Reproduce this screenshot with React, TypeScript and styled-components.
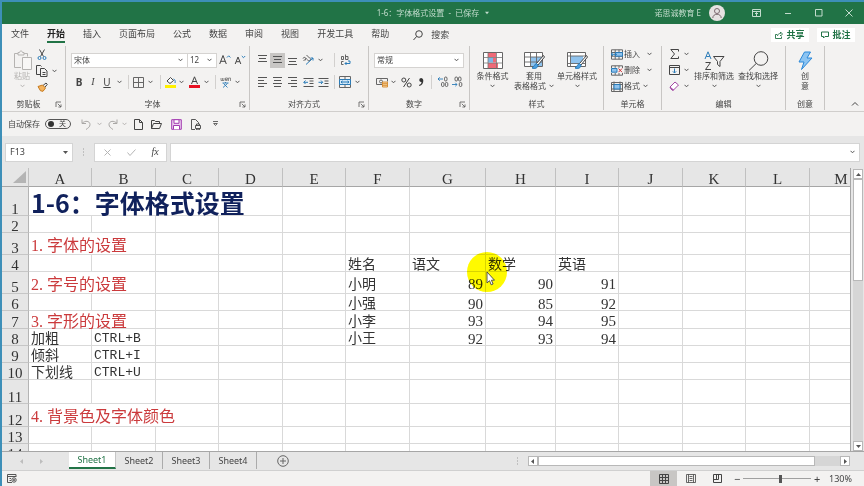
import React from "react";
import styled, { createGlobalStyle, css } from "styled-components";

const GREEN = "#217346";
const INK = "#444444";
const BLUE = "#2b7cb8";
const UI = `"Noto Sans", "Noto Sans CJK SC", sans-serif`;
const SONG = `"Liberation Serif", "Noto Sans CJK SC", serif`;

const GlobalStyle = createGlobalStyle`
  *, *::before, *::after { box-sizing: border-box; }
  body { margin: 0; font-family: ${UI}; font-size: 8px; line-height: 10px; color: ${INK}; }
  button, input, select { font: inherit; color: inherit; margin: 0; padding: 0; border: 0; background: none; border-radius: 0; }
`;

/* ---------- shell ---------- */

const Window = styled.div`
  display: flex;
  flex-direction: column;
  height: 100vh;
  overflow: hidden;
  background: #f3f2f1;
  border-top: 2px solid #3d8fb8;
  border-left: 2px solid #3d8fb8;
`;

const TitleBar = styled.header`
  display: grid;
  grid-template-columns: 1fr auto 1fr;
  align-items: center;
  height: 22px;
  flex: none;
  background: ${GREEN};
  color: #c3dccd;
`;

const DocTitle = styled.h1`
  grid-column: 2;
  margin: 0;
  font-size: 8px;
  font-weight: 400;
  line-height: 12px;
  display: flex;
  align-items: center;
  gap: 4px;
  white-space: pre;
`;

const WindowControls = styled.div`
  display: flex;
  align-items: center;
  justify-content: flex-end;
  padding-right: 8px;
`;

const Account = styled.button`
  display: flex;
  align-items: center;
  gap: 8px;
  white-space: nowrap;
  margin-right: 16px;
`;

const CaptionButton = styled.button`
  width: 31px;
  height: 16px;
  display: flex;
  align-items: center;
  justify-content: center;
  &:last-of-type { width: 14px; margin-left: 8px; }
`;

const TabStrip = styled.nav`
  display: flex;
  align-items: center;
  gap: 18px;
  height: 22px;
  flex: none;
  padding: 0 9px;
  font-size: 9px;
  line-height: 12px;
`;

const RibbonTab = styled.button<{ $active?: boolean }>`
  height: 22px;
  padding-bottom: 2px;
  white-space: nowrap;
  ${(p) =>
    p.$active &&
    css`
      font-weight: 700;
      color: #222;
      background: linear-gradient(${GREEN}, ${GREEN}) 0 17px / 100% 2px no-repeat;
    `}
`;

const SearchBox = styled.button`
  display: flex;
  align-items: center;
  gap: 8px;
  margin-left: 6px;
  white-space: nowrap;
`;

const TabActions = styled.div`
  display: flex;
  gap: 8px;
  margin-left: auto;
`;

const ActionButton = styled.button`
  display: flex;
  align-items: center;
  justify-content: center;
  gap: 3px;
  width: 38px;
  height: 14px;
  background: #fff;
  color: ${GREEN};
  font-weight: 700;
  white-space: nowrap;
`;

/* ---------- ribbon ---------- */

const Ribbon = styled.section`
  display: flex;
  height: 66px;
  flex: none;
  border-bottom: 1px solid #d0cecc;
`;

const GroupBox = styled.div<{ $w: number }>`
  display: flex;
  flex-direction: column;
  flex: none;
  width: ${(p) => p.$w}px;
  margin-bottom: 1px;
  border-right: 1px solid #c8c6c4;
`;

const GroupBody = styled.div<{ $pad?: number }>`
  display: flex;
  flex: 1;
  padding-left: ${(p) => p.$pad ?? 5}px;
`;

const GroupFooter = styled.div`
  display: flex;
  align-items: center;
  height: 12px;
  text-align: center;
`;

const GroupName = styled.span`
  flex: 1;
`;

const Launcher = styled.button`
  width: 10px;
  height: 10px;
  display: flex;
  align-items: center;
`;

const Stack = styled.div`
  display: flex;
  flex-direction: column;
`;

const ToolRow = styled.div<{ $h?: number }>`
  display: flex;
  align-items: center;
  height: ${(p) => p.$h ?? 22}px;
`;

const Tool = styled.button<{ $w: number; $on?: boolean }>`
  display: flex;
  align-items: center;
  justify-content: center;
  flex: none;
  width: ${(p) => p.$w}px;
  height: 15px;
  background: ${(p) => (p.$on ? "#c8c6c4" : "transparent")};
`;

const LetterTool = styled(Tool)<{ $kind?: "bold" | "italic" | "underline" }>`
  font-size: 10px;
  line-height: 12px;
  font-weight: ${(p) => (p.$kind === "bold" ? 700 : 400)};
  font-style: ${(p) => (p.$kind === "italic" ? "italic" : "normal")};
  font-family: ${(p) => (p.$kind === "italic" ? `"Liberation Serif", serif` : UI)};
  text-decoration: ${(p) => (p.$kind === "underline" ? "underline" : "none")};
`;

const Divider = styled.span<{ $w: number }>`
  flex: none;
  width: ${(p) => p.$w}px;
  height: 14px;
  background: linear-gradient(#d2d0ce, #d2d0ce) center / 1px 100% no-repeat;
`;

const Spacer = styled.span<{ $w: number }>`
  flex: none;
  width: ${(p) => p.$w}px;
`;

const BigTool = styled.button<{ $w: number; $dim?: boolean }>`
  display: flex;
  flex-direction: column;
  align-items: center;
  flex: none;
  width: ${(p) => p.$w}px;
  padding-top: 4px;
  color: ${(p) => (p.$dim ? "#b5b3b1" : INK)};
  white-space: nowrap;
`;

const BigIcon = styled.span`
  display: flex;
  align-items: center;
  height: 21px;
`;

const BigLine = styled.span`
  display: flex;
  align-items: center;
  gap: 3px;
  height: 10px;
`;

const RowTool = styled.button`
  display: flex;
  align-items: center;
  height: 16px;
  white-space: nowrap;
`;

const RowLabel = styled.span<{ $w: number }>`
  width: ${(p) => p.$w}px;
  padding-left: 1px;
  text-align: left;
`;

const Combo = styled.label<{ $w: number }>`
  display: flex;
  align-items: center;
  width: ${(p) => p.$w}px;
  height: 15px;
  flex: none;
  padding: 0 4px 0 2px;
  background: #fff;
  border: 1px solid #d5d3d1;
  & + & { border-left: 0; }
  select {
    appearance: none;
    flex: 1;
    min-width: 0;
    height: 12px;
    outline: none;
  }
`;

const RibbonTail = styled.div`
  flex: 1;
  display: flex;
  align-items: flex-end;
  justify-content: flex-end;
  padding: 0 5px 2px 0;
`;

/* ---------- quick access and formula bars ---------- */

const QuickBar = styled.div`
  display: flex;
  align-items: center;
  height: 24px;
  flex: none;
  padding-left: 6px;
`;

const AutoSave = styled.label`
  display: flex;
  align-items: center;
  gap: 5px;
  margin-right: 8px;
  white-space: nowrap;
`;

const Switch = styled.span`
  display: flex;
  align-items: center;
  justify-content: space-between;
  width: 26px;
  height: 10px;
  padding: 0 4px 0 2px;
  border: 1px solid #555;
  border-radius: 5px;
  font-size: 7px;
  line-height: 8px;
  input {
    appearance: none;
    width: 6px;
    height: 6px;
    border-radius: 3px;
    background: #333;
  }
`;

const FormulaBar = styled.div`
  display: flex;
  align-items: center;
  height: 32px;
  flex: none;
  padding: 0 4px 0 3px;
  background: #e6e6e6;
`;

const FieldBox = styled.div<{ $w?: number }>`
  display: flex;
  align-items: center;
  height: 19px;
  background: #fff;
  border: 1px solid #d4d4d4;
  ${(p) => (p.$w ? `width: ${p.$w}px; flex: none;` : "flex: 1;")}
  padding: 0 4px;
  input {
    flex: 1;
    min-width: 0;
    outline: none;
  }
`;

const NameBox = styled(FieldBox)`
  font-size: 9px;
`;

const CheckButtons = styled(FieldBox)`
  padding: 0;
  margin-right: 3px;
`;

const Dots = styled.span<{ $w: number }>`
  flex: none;
  width: ${(p) => p.$w}px;
  height: 10px;
  background: radial-gradient(circle, #999 0 1px, transparent 1px) center / 3px 3px repeat-y;
`;

/* ---------- sheet ---------- */

const SheetArea = styled.main`
  display: flex;
  flex: 1;
  min-height: 0;
  background: #e6e6e6;
`;

const GridPane = styled.div`
  position: relative;
  flex: 1;
  min-width: 0;
  overflow: hidden;
  background: #fff;
  border-right: 1px solid #a6a6a6;
`;

const Grid = styled.table`
  table-layout: fixed;
  width: 0;
  border-collapse: separate;
  border-spacing: 0;
  font-family: ${SONG};
  font-size: 15px;
  line-height: 12px;
  color: #333;
  white-space: nowrap;
`;

const ColHead = styled.th`
  height: 19px;
  padding: 4px 0 0;
  font-weight: 400;
  background: #e6e6e6;
  border-right: 1px solid #c0c0c0;
  border-bottom: 1px solid #a6a6a6;
`;

const CornerHead = styled(ColHead)`
  padding: 2px 2px 2px 0;
  svg { display: block; margin-left: auto; }
`;

const RowHead = styled.th`
  padding: 0;
  font-weight: 400;
  vertical-align: bottom;
  background: #e6e6e6;
  border-right: 1px solid #b4b4b4;
  border-bottom: 1px solid #c6c6c6;
`;

const Row = styled.tr<{ $h: number }>`
  height: ${(p) => p.$h}px;
`;

type Look = "text" | "number" | "title" | "topic" | "key";

const looks = {
  text: css`font-size: 14px;`,
  number: css`text-align: right; padding-top: 3px;`,
  title: css`
    padding-top: 2px;
    font-family: "Noto Sans CJK SC", sans-serif;
    font-size: 25px;
    font-weight: 700;
    line-height: 26px;
    color: #10215c;
  `,
  topic: css`font-size: 16px; color: #cb3a3c;`,
  key: css`font-family: "Liberation Mono", monospace; font-size: 13px;`,
};

const Cell = styled.td<{ $look?: Look }>`
  padding: 4px 2px 0;
  vertical-align: middle;
  border-right: 1px solid #d9d9d9;
  border-bottom: 1px solid #d9d9d9;
  ${(p) => p.$look && looks[p.$look]}
`;

const Spotlight = styled.span`
  position: absolute;
  left: 465px;
  top: 84px;
  width: 40px;
  height: 40px;
  border-radius: 20px;
  background: #fffa00;
  mix-blend-mode: multiply;
`;

const Pointer = styled.svg`
  position: absolute;
  left: 484px;
  top: 103px;
`;

const VScroll = styled.div`
  display: flex;
  flex-direction: column;
  width: 10px;
  flex: none;
  margin: 1px 1px 0 2px;
  background: #d6d6d6;
`;

const ScrollArrow = styled.button`
  display: flex;
  align-items: center;
  justify-content: center;
  flex: none;
  width: 10px;
  height: 10px;
  background: #fff;
  border: 1px solid #b8b8b8;
`;

const VThumb = styled.div`
  width: 10px;
  flex: 0 0 36%;
  margin-bottom: auto;
  background: #fff;
  border: 1px solid #b8b8b8;
`;

const SheetTabs = styled.div`
  display: flex;
  align-items: center;
  height: 20px;
  flex: none;
  background: #e6e6e6;
  border-top: 1px solid #a6a6a6;
  border-bottom: 1px solid #d0d0d0;
  padding-right: 14px;
`;

const SheetNav = styled.div`
  display: flex;
  justify-content: space-between;
  width: 67px;
  padding: 0 25px 0 17px;
`;

const SheetTab = styled.button<{ $active?: boolean }>`
  width: 47px;
  height: 17px;
  align-self: flex-start;
  font-size: 9px;
  line-height: 14px;
  border-right: 1px solid #ababab;
  ${(p) =>
    p.$active &&
    css`
      background: #fff;
      color: ${GREEN};
      border-right: 1px solid #c6c6c6;
      border-bottom: 2px solid ${GREEN};
    `}
`;

const AddSheet = styled.button`
  display: flex;
  margin-left: 20px;
  margin-right: auto;
`;

const HScroll = styled.div`
  display: flex;
  align-items: center;
  width: 38%;
  height: 10px;
  background: #d6d6d6;
`;

const HThumb = styled.div`
  flex: 0 0 86%;
  height: 10px;
  margin-right: auto;
  background: #fff;
  border: 1px solid #b8b8b8;
`;

const StatusBar = styled.footer`
  display: flex;
  align-items: center;
  height: 15px;
  flex: none;
  padding: 0 12px 0 5px;
`;

const ViewButton = styled.button<{ $on?: boolean }>`
  display: flex;
  align-items: center;
  justify-content: center;
  width: 27px;
  height: 15px;
  background: ${(p) => (p.$on ? "#c8c6c4" : "transparent")};
  &:first-of-type { margin-left: auto; }
`;

const ZoomStep = styled.button`
  width: 12px;
  font-size: 11px;
  line-height: 12px;
`;

const ZoomSlider = styled.input`
  appearance: none;
  width: 68px;
  height: 10px;
  background: linear-gradient(#a0a0a0, #a0a0a0) center / 100% 1px no-repeat;
  &::-webkit-slider-thumb {
    appearance: none;
    width: 3px;
    height: 8px;
    background: #555;
  }
`;

const ZoomValue = styled.span`
  margin-left: 6px;
  font-size: 9px;
`;

/* ---------- icons ---------- */

const Svg = ({ w, h, children, stroke = INK, sw = 1, vb }: {
  w: number; h: number; children: React.ReactNode; stroke?: string; sw?: number; vb?: string;
}) => (
  <svg width={w} height={h} viewBox={vb ?? `0 0 ${w} ${h}`} fill="none" stroke={stroke} strokeWidth={sw} aria-hidden="true">
    {children}
  </svg>
);

const Chevron = ({ color = "#555" }: { color?: string }) => (
  <Svg w={5} h={4} stroke={color}><path d="M.5.8 2.5 2.8 4.5.8" /></Svg>
);

const Triangle = ({ dir, color = "#555", size = 5 }: { dir: "up" | "down" | "left" | "right"; color?: string; size?: number }) => {
  const d = { up: "M0 4 2.5 1 5 4z", down: "M0 1h5L2.5 4z", left: "M4 0v5L1 2.5z", right: "M1 0v5l3-2.5z" }[dir];
  return <Svg w={size} h={size} vb="0 0 5 5" stroke="none"><path d={d} fill={color} /></Svg>;
};

const LauncherIcon = () => (
  <Svg w={7} h={7} stroke="#555" sw={0.8}><path d="M1 6V1h5M2.8 2.8 6 6M6 3.4V6H3.4" /></Svg>
);

const Lines = ({ rows, y = [1.5, 4.5, 7.5] }: { rows: [number, number][]; y?: number[] }) => (
  <Svg w={11} h={12} stroke="#555">
    {rows.map(([a, b], i) => <path key={i} d={`M${a} ${y[i]}H${b}`} />)}
  </Svg>
);

const PasteIcon = () => (
  <Svg w={19} h={21} stroke="#b5b3b1">
    <path d="M8 17.5H1.5V3.5H5M11 3.5h3.500v3M5 5V2.500h1.500c0-2 3-2 3 0H11V5z" />
    <path d="M9.500 7.500h9v12h-9z" fill="#f8f7f6" />
  </Svg>
);

const CutIcon = () => (
  <Svg w={10} h={11}><path d="M2.500.5 6.500 7.500M7.500.5 3.500 7.500" /><circle cx="2.500" cy="9" r="1.500" stroke={BLUE} /><circle cx="7.500" cy="9" r="1.500" stroke={BLUE} /></Svg>
);

const CopyIcon = () => (
  <Svg w={12} h={12}><path d="M4 9.500H.5v-9h4l1 1M4.500 3.500h4l2.500 2.500v5.500H4.500zM6.500 7.500h3M6.500 9.500h3" /></Svg>
);

const BrushIcon = () => (
  <Svg w={11} h={10}><path d="M6 3.500 9 1l1.300 1.300L8 5.200" /><path d="M1 4.500 5.500 3l3 3L6 9.300 3.500 8.800z" fill="#f4b45f" stroke="#c77a1c" /></Svg>
);

const GrowIcon = ({ up }: { up: boolean }) => (
  <Svg w={12} h={12}>
    <path d={up ? "M.7 10 4 1.500 7.300 10M1.900 7.300h4.200" : "M1.200 10 4 3l2.800 7M2.200 7.700h3.600"} />
    <path d={up ? "M8 3.500 9.700 1.800 11.400 3.500" : "M7.800 2 9.500 3.700 11.200 2"} stroke={BLUE} />
  </Svg>
);

const BordersIcon = () => (
  <Svg w={11} h={11} stroke="#666"><path d="M.5.5h10v10H.5zM5.500.5v10M.5 5.500h10" /></Svg>
);

const FillIcon = () => (
  <Svg w={11} h={12}><path d="M2 5 5.500 1.500 8.500 4.500 5 7.500z" fill="#fff" /><path d="M8.500 3c1.500.5 2 2 1.500 4" stroke={BLUE} /><path d="M0 10.500h11" stroke="#fff000" strokeWidth="3" /></Svg>
);

const FontColorIcon = () => (
  <Svg w={11} h={12}><path d="M2.500 8 5.500.8 8.500 8M3.500 5.500h4" /><path d="M0 10.500h11" stroke="#e81123" strokeWidth="3" /></Svg>
);

const PhoneticIcon = () => (
  <Svg w={12} h={11} stroke="#777"><path d="M1 1v2.500h3V1M2.500 1v2.500M5 2.500h2.500V1H5.500v2.500h2M8.500 4V1h2v3" strokeWidth=".8" /><path d="M2.500 6h6M5.500 5v1M3.500 6.500 7.500 10.500M7.500 6.500 3 10.500" stroke={BLUE} strokeWidth=".9" /></Svg>
);

const OrientIcon = () => (
  <Svg w={13} h={12} stroke="#555"><path d="M1 4.500a1.500 1.500 0 1 1 2 1.800M1.500 7 4.500 4M4.500 1l3 3a1.500 1.500 0 1 1-2 1.500" strokeWidth=".9" /><path d="M4 10.500 11 4M8.500 4H11v2.500" stroke={BLUE} /></Svg>
);

const WrapIcon = () => (
  <Svg w={11} h={12} stroke="#555"><path d="M1.500 2.500h2v3h-2zM5.500.5v5h2.500v-3H5.500M3.500 7.500H1.500v3h2" strokeWidth=".9" /><path d="M8 7h2v2.500H5M6.500 8 5 9.500 6.500 11" stroke={BLUE} /></Svg>
);

const IndentIcon = ({ out }: { out?: boolean }) => (
  <Svg w={11} h={11} stroke="#555"><path d="M.5 1.500h10M6.500 4h4M6.500 6.500h4M.5 9.500h10" /><path d={out ? "M5 5.300H.8M2.500 3.500.8 5.300 2.500 7" : "M.5 5.300h4.200M3 3.500l1.700 1.800L3 7"} stroke={BLUE} /></Svg>
);

const MergeIcon = () => (
  <Svg w={12} h={12}><path d="M.5.5h11v11H.5z" stroke="#666" /><path d="M.5 3.500h11v5H.5z" fill="#d3e8f7" stroke={BLUE} /><path d="M2 6h8M3.500 4.800 2 6l1.500 1.200M8.500 4.800 10 6 8.500 7.200" stroke={BLUE} /><path d="M6 .5v3M6 8.500v3" stroke="#666" /></Svg>
);

const CurrencyIcon = () => (
  <Svg w={12} h={11}><path d="M6 7.500H.5v-6h11v3" stroke="#666" /><circle cx="5" cy="4.500" r="1.500" stroke="#666" /><path d="M6.500 5h5v5h-5zM6.500 6.700h5M6.500 8.300h5" fill="#f9d8a8" stroke="#d58a2c" strokeWidth=".9" /></Svg>
);

const DecimalIcon = ({ more }: { more: boolean }) => (
  <Svg w={12} h={12} stroke="#555" sw={0.9}>
    <rect x="7.500" y="1" width="2.500" height="4" rx="1.200" />
    <rect x={more ? 4.5 : 4} y={more ? 6.5 : 1} width="2.500" height="4" rx="1.200" />
    <rect x="8.300" y="6.500" width="2.500" height="4" rx="1.200" />
    <path d={more ? "M6 3H1M2.700 1.300 1 3l1.700 1.700" : "M1 8.500h5M4.300 6.800 6 8.500 4.300 10.200"} stroke={BLUE} />
  </Svg>
);

const CondIcon = () => (
  <Svg w={20} h={17}>
    <path d="M.5.5h19v16H.5z" fill="#fff" stroke="#666" />
    <path d="M5 1h8v4H5zM5 11h10v5H5z" fill="#ef6a78" stroke="none" />
    <path d="M5 5.500h5v5H5z" fill="#7fb6e6" stroke="none" />
    <path d="M10 5.500h3v5h-3z" fill="#ef6a78" stroke="none" />
    <path d="M5 .5v16M13.500.5v16M.5 5.500h19M.5 11h19" stroke="#777" strokeWidth=".8" />
  </Svg>
);

const TableBrushIcon = ({ solid }: { solid?: boolean }) => (
  <Svg w={21} h={19}>
    <path d="M.5 1.500h18v14H.5z" fill="#fff" stroke="#666" />
    <path d={solid ? "M3.500 5h12.500v7.500H3.500z" : "M7 6h11v9H7z"} fill="#8fc3ee" stroke="none" />
    <path d={solid ? "M3.500 1.500v14M.5 5h18M.5 12.500h18" : "M6.500 1.500v14M12.500 1.500v14M.5 6h18M.5 11h18"} stroke="#666" strokeWidth=".9" />
    <path d="M19.500 4.500 12.500 12.500l1.500 1.500L20.500 6z" fill="#fff" />
    <path d="M12.500 12.500c-2 .5-2 3-4.500 4.500 3 1.300 6 0 6-3z" fill="#4a9ee0" stroke={BLUE} />
  </Svg>
);

const InsertCellsIcon = () => (
  <Svg w={12} h={11} stroke="#666"><path d="M.5.8h11v9.400H.5zM.5 3.500h11M.5 7.200h11M4.200.8v9.400M8 .8v9.400" /><path d="M4.500 3.500h7v3.700h-7z" fill="#8fc3ee" stroke={BLUE} /><path d="M6 5.300H0M2 3.500 0 5.300 2 7" stroke={BLUE} /></Svg>
);

const DeleteCellsIcon = () => (
  <Svg w={12} h={11} stroke="#666"><path d="M.5 3V.8h11V3M.5 8v2.200h11V8M4.200.8v2M8 .8v2M4.200 8v2M8 8v2" /><path d="M.5 3.500h5.500v3.700H.5z" fill="#8fc3ee" stroke={BLUE} /><path d="M7.500 3.500 11 7.200M11 3.500 7.500 7.200" stroke="#d13438" /></Svg>
);

const FormatCellsIcon = () => (
  <Svg w={12} h={11} stroke="#666"><path d="M.5 1.500h11v9H.5zM3 .5v10M9 .5v10M.5 3.500h11M.5 8h11" /><path d="M3 3.500h6V8H3z" fill="#8fc3ee" stroke={BLUE} /></Svg>
);

const SigmaIcon = () => <Svg w={9} h={10}><path d="M8.500 2.500v-2H.8L4.500 5 .8 9.500h7.700v-2" /></Svg>;
const FillDownIcon = () => <Svg w={11} h={10}><path d="M.5.5h10v9H.5zM.5 2.500h10" /><path d="M5.500 3.500v4.500M3.800 6.300 5.500 8l1.700-1.700" stroke={BLUE} /></Svg>;
const EraserIcon = () => <Svg w={11} h={10} stroke="#a349a4"><path d="M1 6 6 1l3.500 3L4.500 9H3z" fill="#fff" /><path d="M1 6l3.500 3H3z" fill="#c98bd0" /></Svg>;

const SortIcon = () => (
  <Svg w={21} h={20}><path d="M1 8 4 .8 7 8M2.200 5.500h3.600" stroke={BLUE} /><path d="M1.500 11.500h5l-5 7h5.500" /><path d="M9.500 5.500h10.500L16 10.500v5l-2.500-2v-3z" /></Svg>
);
const FindIcon = () => <Svg w={21} h={20}><circle cx="13" cy="7.500" r="6.800" /><path d="M8.200 12.500 1 19.500" /></Svg>;
const IdeasIcon = () => <Svg w={15} h={20}><path d="M6.500 1h6l-3.500 6h5L3.500 18.500 6 11H1z" fill="#8cc4f2" stroke="#2b88d8" /></Svg>;

const UndoIcon = ({ flip }: { flip?: boolean }) => (
  <Svg w={10} h={11} stroke="#a9a7a5"><path d={flip ? "M9 .5V4.500H5M9 4.500C6 1 1 2 1 5.500 1 8 3 9 5 10.500" : "M1 .5v4h4M1 4.500c3-3.500 8-2.500 8 1C9 8 7 9 5 10.500"} /></Svg>
);
const NewIcon = () => <Svg w={9} h={11}><path d="M.5.5h5l3 3v7h-8zM5.500.5v3h3" /></Svg>;
const OpenIcon = () => <Svg w={11} h={9}><path d="M.5 8.500v-8h3l1 1h4v2M.5 8.500l2-5h8l-2 5z" /></Svg>;
const SaveIcon = () => <Svg w={11} h={11} stroke="#a33bb0"><path d="M.7.7h9.600v9.600H.7z" fill="#ecd0f0" /><path d="M3 .7h5v3.600H3zM2.500 10.300V6.500h6v3.800" fill="#fff" /></Svg>;
const PrintIcon = () => <Svg w={11} h={11}><path d="M4 10.500H.5V.5h4l3 3V5M4.500 6.500h5v3h-5zM5.500 6.500V5h3v1.500M5.500 9.500v1.300h3V9.500" strokeWidth=".9" /></Svg>;

const Avatar = () => (
  <Svg w={16} h={16} stroke="#7c6a70"><circle cx="8" cy="8" r="8" fill="#e6e2e2" stroke="none" /><circle cx="8" cy="6" r="2.500" /><path d="M3.800 13c0-5 8.400-5 8.400 0" /></Svg>
);

const StatusIcon = () => (
  <Svg w={10} h={9} stroke="#555"><path d="M5 8.500H.5v-8h8.500V3M.5 2.500H9M2.500 4.500h1.500M2.500 6.500h1.500" /><circle cx="7" cy="6" r="2.200" /><circle cx="7" cy="6" r=".6" fill="#555" /></Svg>
);
const NormalViewIcon = () => <Svg w={10} h={10}><path d="M.5.5h9v9h-9zM3.500.5v9M6.500.5v9M.5 3.500h9M.5 6.500h9" /></Svg>;
const PageViewIcon = () => <Svg w={10} h={9}><path d="M.5.5h9v8h-9zM2.500.5v8M7.500.5v8M3.500 2.500h3M3.500 4.500h3M3.500 6.500h3" strokeWidth=".8" /></Svg>;
const BreakViewIcon = () => <Svg w={9} h={9}><path d="M.5.5h8v8h-8zM.5 5.500h5v-5M3.500.5v5" /></Svg>;

/* ---------- data ---------- */

const columns: [string, number][] = [
  ["A", 63], ["B", 64], ["C", 63], ["D", 64], ["E", 63], ["F", 64], ["G", 76],
  ["H", 70], ["I", 63], ["J", 64], ["K", 63], ["L", 64], ["M", 63],
];

type CellData = { text: string; look: Look; span?: number };
type RowData = { h: number; cells?: Record<string, CellData> };

const topic = (text: string, span = 2): CellData => ({ text, look: "topic", span });
const t = (text: string): CellData => ({ text, look: "text" });
const n = (text: string): CellData => ({ text, look: "number" });
const k = (text: string): CellData => ({ text, look: "key" });

const rows: RowData[] = [
  { h: 29, cells: { A: { text: "1-6：字体格式设置", look: "title", span: 4 } } },
  { h: 17 },
  { h: 22, cells: { A: topic("1. 字体的设置") } },
  { h: 17, cells: { F: t("姓名"), G: t("语文"), H: t("数学"), I: t("英语") } },
  { h: 22, cells: { A: topic("2. 字号的设置"), F: t("小明"), G: n("89"), H: n("90"), I: n("91") } },
  { h: 17, cells: { F: t("小强"), G: n("90"), H: n("85"), I: n("92") } },
  { h: 18, cells: { A: topic("3. 字形的设置"), F: t("小李"), G: n("93"), H: n("94"), I: n("95") } },
  { h: 17, cells: { A: t("加粗"), B: k("CTRL+B"), F: t("小王"), G: n("92"), H: n("93"), I: n("94") } },
  { h: 17, cells: { A: t("倾斜"), B: k("CTRL+I") } },
  { h: 17, cells: { A: t("下划线"), B: k("CTRL+U") } },
  { h: 24 },
  { h: 23, cells: { A: topic("4. 背景色及字体颜色", 3) } },
  { h: 17 },
  { h: 17 },
];

const SheetRow = ({ row, index }: { row: RowData; index: number }) => {
  const cells: React.ReactNode[] = [];
  for (let c = 0; c < columns.length; ) {
    const name = columns[c][0];
    const data = row.cells?.[name];
    cells.push(<Cell key={name} colSpan={data?.span} $look={data?.look}>{data?.text}</Cell>);
    c += data?.span ?? 1;
  }
  return <Row $h={row.h}><RowHead scope="row">{index + 1}</RowHead>{cells}</Row>;
};

const Group = ({ name, w, pad, launcher, children }: {
  name: string; w: number; pad?: number; launcher?: boolean; children: React.ReactNode;
}) => (
  <GroupBox $w={w} role="group" aria-label={name}>
    <GroupBody $pad={pad}>{children}</GroupBody>
    <GroupFooter>
      <GroupName>{name}</GroupName>
      {launcher && <Launcher aria-label={`${name}设置`}><LauncherIcon /></Launcher>}
    </GroupFooter>
  </GroupBox>
);

const Drop = ({ w, label, color }: { w: number; label: string; color?: string }) => (
  <Tool $w={w} aria-label={label}><Chevron color={color} /></Tool>
);

const tabs = ["文件", "开始", "插入", "页面布局", "公式", "数据", "审阅", "视图", "开发工具", "帮助"];

export default function App() {
  return (
    <>
      <GlobalStyle />
      <Window>
        <TitleBar>
          <DocTitle>1-6：字体格式设置  -  已保存 <Triangle dir="down" color="#c3dccd" size={4} /></DocTitle>
          <WindowControls>
            <Account>诺思诚教育 E<Avatar /></Account>
            <CaptionButton aria-label="功能区显示选项">
              <Svg w={9} h={8} stroke="#c3dccd"><path d="M.5.5h8v7h-8zM.5 2.500h8M4.500 7V3.500M3 5l1.500-1.500L6 5" /></Svg>
            </CaptionButton>
            <CaptionButton aria-label="最小化"><Svg w={8} h={8} stroke="#c3dccd"><path d="M1 4.500h6" /></Svg></CaptionButton>
            <CaptionButton aria-label="最大化"><Svg w={8} h={8} stroke="#c3dccd"><path d="M.5.5h6.500v6.500H.5z" /></Svg></CaptionButton>
            <CaptionButton aria-label="关闭"><Svg w={8} h={8} stroke="#c3dccd"><path d="M.5.5l7 7M7.500.5l-7 7" /></Svg></CaptionButton>
          </WindowControls>
        </TitleBar>

        <TabStrip>
          {tabs.map((name) => <RibbonTab key={name} $active={name === "开始"}>{name}</RibbonTab>)}
          <SearchBox><Svg w={10} h={11}><circle cx="6" cy="4" r="3.300" /><path d="M3.600 6.500.5 10" /></Svg>搜索</SearchBox>
          <TabActions>
            <ActionButton><Svg w={8} h={8} stroke={GREEN}><path d="M2 3.500H.5v4h6v-2M2.500 5c0-2 1.500-2.500 3-2.500V1l2 2-2 2V4" strokeWidth=".9" /></Svg>共享</ActionButton>
            <ActionButton><Svg w={8} h={8} stroke={GREEN}><path d="M.5 1h7v4.500H4L2.500 7V5.500h-2z" /></Svg>批注</ActionButton>
          </TabActions>
        </TabStrip>

        <Ribbon>
          <Group name="剪贴板" w={64} pad={8} launcher>
            <BigTool $w={24} $dim>
              <BigIcon><PasteIcon /></BigIcon>
              <BigLine>粘贴</BigLine>
              <BigLine><Chevron color="#b5b3b1" /></BigLine>
            </BigTool>
            <Stack>
              <ToolRow $h={17}><Tool $w={16} aria-label="剪切"><CutIcon /></Tool></ToolRow>
              <ToolRow $h={16}><Tool $w={16} aria-label="复制"><CopyIcon /></Tool><Drop w={8} label="复制选项" /></ToolRow>
              <ToolRow $h={16}><Tool $w={16} aria-label="格式刷"><BrushIcon /></Tool></ToolRow>
            </Stack>
          </Group>

          <Group name="字体" w={184} launcher>
            <Stack>
              <ToolRow $h={28}>
                <Combo $w={117}><select aria-label="字体"><option>宋体</option></select><Chevron /></Combo>
                <Combo $w={29}><select aria-label="字号"><option>12</option></select><Chevron /></Combo>
                <Tool $w={15} aria-label="增大字号"><GrowIcon up /></Tool>
                <Tool $w={15} aria-label="减小字号"><GrowIcon up={false} /></Tool>
              </ToolRow>
              <ToolRow $h={16}>
                <Spacer $w={1} />
                <LetterTool $w={14} $kind="bold">B</LetterTool>
                <LetterTool $w={14} $kind="italic">I</LetterTool>
                <LetterTool $w={14} $kind="underline">U</LetterTool>
                <Drop w={10} label="下划线选项" />
                <Divider $w={8} />
                <Tool $w={12} aria-label="边框"><BordersIcon /></Tool>
                <Drop w={12} label="边框选项" />
                <Divider $w={8} />
                <Tool $w={12} aria-label="填充颜色"><FillIcon /></Tool>
                <Drop w={11} label="填充颜色选项" />
                <Tool $w={14} aria-label="字体颜色"><FontColorIcon /></Tool>
                <Drop w={10} label="字体颜色选项" />
                <Divider $w={9} />
                <Tool $w={12} aria-label="拼音"><PhoneticIcon /></Tool>
                <Drop w={10} label="拼音选项" />
              </ToolRow>
            </Stack>
          </Group>

          <Group name="对齐方式" w={119} launcher>
            <Stack>
              <ToolRow $h={28}>
                <Tool $w={15} aria-label="顶端对齐"><Lines rows={[[1, 10], [2, 9], [1, 10]]} /></Tool>
                <Tool $w={15} $on aria-label="垂直居中"><Lines rows={[[1, 10], [2, 9], [1, 10]]} y={[2.5, 5.5, 8.5]} /></Tool>
                <Tool $w={15} aria-label="底端对齐"><Lines rows={[[1, 10], [2, 9], [1, 10]]} y={[4.5, 7.5, 10.5]} /></Tool>
                <Tool $w={16} aria-label="方向"><OrientIcon /></Tool>
                <Drop w={8} label="方向选项" />
                <Spacer $w={7} />
                <Divider $w={6} />
                <Tool $w={16} aria-label="自动换行"><WrapIcon /></Tool>
              </ToolRow>
              <ToolRow $h={16}>
                <Tool $w={15} aria-label="左对齐"><Lines rows={[[1, 10], [1, 7], [1, 10], [1, 7]]} y={[1.5, 4.5, 7.5, 10.5]} /></Tool>
                <Tool $w={15} aria-label="居中"><Lines rows={[[1, 10], [2, 9], [1, 10], [2, 9]]} y={[1.5, 4.5, 7.5, 10.5]} /></Tool>
                <Tool $w={15} aria-label="右对齐"><Lines rows={[[1, 10], [4, 10], [1, 10], [4, 10]]} y={[1.5, 4.5, 7.5, 10.5]} /></Tool>
                <Tool $w={16} aria-label="减少缩进量"><IndentIcon out /></Tool>
                <Tool $w={15} aria-label="增加缩进量"><IndentIcon /></Tool>
                <Divider $w={6} />
                <Tool $w={16} aria-label="合并后居中"><MergeIcon /></Tool>
                <Drop w={8} label="合并选项" />
              </ToolRow>
            </Stack>
          </Group>

          <Group name="数字" w={101} launcher>
            <Stack>
              <ToolRow $h={28}>
                <Combo $w={90}><select aria-label="数字格式"><option>常规</option></select><Chevron /></Combo>
              </ToolRow>
              <ToolRow $h={16}>
                <Tool $w={15} aria-label="会计数字格式"><CurrencyIcon /></Tool>
                <Drop w={9} label="货币选项" />
                <Tool $w={16} aria-label="百分比样式">
                  <Svg w={11} h={11}><circle cx="2.800" cy="3" r="2" /><circle cx="8.200" cy="8" r="2" /><path d="M8.500 1 2.500 10" /></Svg>
                </Tool>
                <Tool $w={14} aria-label="千位分隔样式">
                  <Svg w={6} h={10} stroke="none"><path d="M3 1a2 2 0 1 0 .5 4C3.500 6.500 2.500 7.500 1 8l.4 1C4 8.200 5.500 6 5.300 3.500 5.200 2 4.300 1 3 1z" fill="#333" /></Svg>
                </Tool>
                <Divider $w={7} />
                <Tool $w={15} aria-label="增加小数位数"><DecimalIcon more /></Tool>
                <Tool $w={14} aria-label="减少小数位数"><DecimalIcon more={false} /></Tool>
              </ToolRow>
            </Stack>
          </Group>

          <Group name="样式" w={134} pad={2}>
            <BigTool $w={41}><BigIcon><CondIcon /></BigIcon><BigLine>条件格式</BigLine><BigLine><Chevron /></BigLine></BigTool>
            <BigTool $w={42}><BigIcon><TableBrushIcon /></BigIcon><BigLine>套用</BigLine><BigLine>表格格式 <Chevron /></BigLine></BigTool>
            <BigTool $w={44}><BigIcon><TableBrushIcon solid /></BigIcon><BigLine>单元格样式</BigLine><BigLine><Chevron /></BigLine></BigTool>
          </Group>

          <Group name="单元格" w={58} pad={7}>
            <Stack>
              <RowTool><InsertCellsIcon /><RowLabel $w={24}>插入</RowLabel><Chevron /></RowTool>
              <RowTool><DeleteCellsIcon /><RowLabel $w={24}>删除</RowLabel><Chevron /></RowTool>
              <RowTool><FormatCellsIcon /><RowLabel $w={20}>格式</RowLabel><Chevron /></RowTool>
            </Stack>
          </Group>

          <Group name="编辑" w={124}>
            <Stack>
              <ToolRow $h={16}><Tool $w={14} aria-label="自动求和"><SigmaIcon /></Tool><Drop w={10} label="求和选项" /></ToolRow>
              <ToolRow $h={16}><Tool $w={14} aria-label="填充"><FillDownIcon /></Tool><Drop w={10} label="填充选项" /></ToolRow>
              <ToolRow $h={16}><Tool $w={14} aria-label="清除"><EraserIcon /></Tool><Drop w={10} label="清除选项" /></ToolRow>
            </Stack>
            <BigTool $w={46}><BigIcon><SortIcon /></BigIcon><BigLine>排序和筛选</BigLine><BigLine><Chevron /></BigLine></BigTool>
            <BigTool $w={42}><BigIcon><FindIcon /></BigIcon><BigLine>查找和选择</BigLine><BigLine><Chevron /></BigLine></BigTool>
          </Group>

          <Group name="创意" w={39} pad={0}>
            <BigTool $w={38}><BigIcon><IdeasIcon /></BigIcon><BigLine>创</BigLine><BigLine>意</BigLine></BigTool>
          </Group>

          <RibbonTail>
            <button aria-label="折叠功能区"><Svg w={8} h={6}><path d="M1 4.500l3-3 3 3" /></Svg></button>
          </RibbonTail>
        </Ribbon>

        <QuickBar>
          <AutoSave>自动保存<Switch><input type="checkbox" aria-label="自动保存" />关</Switch></AutoSave>
          <Tool $w={14} aria-label="撤消"><UndoIcon /></Tool>
          <Drop w={13} label="撤消选项" color="#b5b3b1" />
          <Tool $w={13} aria-label="恢复"><UndoIcon flip /></Tool>
          <Drop w={11} label="恢复选项" color="#b5b3b1" />
          <Tool $w={16} aria-label="新建"><NewIcon /></Tool>
          <Tool $w={20} aria-label="打开"><OpenIcon /></Tool>
          <Tool $w={20} aria-label="保存"><SaveIcon /></Tool>
          <Tool $w={20} aria-label="打印预览"><PrintIcon /></Tool>
          <Tool $w={18} aria-label="自定义快速访问工具栏"><Svg w={5} h={6}><path d="M0 .5h5M.7 2.500h3.600L2.500 4.500z" strokeWidth=".8" /></Svg></Tool>
        </QuickBar>

        <FormulaBar>
          <NameBox $w={68}><input aria-label="名称框" defaultValue="F13" /><Triangle dir="down" /></NameBox>
          <Dots $w={21} />
          <CheckButtons $w={73}>
            <Tool $w={24} aria-label="取消"><Svg w={7} h={7} stroke="#b5b5b5"><path d="M.5.5l6 6M6.500.5l-6 6" /></Svg></Tool>
            <Tool $w={24} aria-label="输入"><Svg w={9} h={7} stroke="#b5b5b5"><path d="M.5 3.500l2.500 3L8.500.5" /></Svg></Tool>
            <LetterTool $w={24} $kind="italic">fx</LetterTool>
          </CheckButtons>
          <FieldBox><input aria-label="编辑栏" /><Chevron /></FieldBox>
        </FormulaBar>

        <SheetArea>
          <GridPane>
            <Grid>
              <colgroup>
                <col width={27} />
                {columns.map(([name, w]) => <col key={name} width={w} />)}
              </colgroup>
              <thead>
                <tr>
                  <CornerHead aria-label="全选"><Svg w={13} h={12} stroke="none"><path d="M13 0v12H0z" fill="#b4b4b4" /></Svg></CornerHead>
                  {columns.map(([name]) => <ColHead key={name} scope="col">{name}</ColHead>)}
                </tr>
              </thead>
              <tbody>
                {rows.map((row, i) => <SheetRow key={i} row={row} index={i} />)}
              </tbody>
            </Grid>
            <Spotlight />
            <Pointer width="9" height="15" viewBox="0 0 9 15" aria-hidden="true">
              <path d="M1 1v11l2.500-2.300L5.200 13.800l1.900-.8L5.400 9.200H8.500z" fill="#fff" stroke="#444" strokeWidth=".9" />
            </Pointer>
          </GridPane>
          <VScroll>
            <ScrollArrow aria-label="向上滚动"><Triangle dir="up" /></ScrollArrow>
            <VThumb />
            <ScrollArrow aria-label="向下滚动"><Triangle dir="down" /></ScrollArrow>
          </VScroll>
        </SheetArea>

        <SheetTabs>
          <SheetNav><Triangle dir="left" color="#bdbdbd" /><Triangle dir="right" color="#bdbdbd" /></SheetNav>
          <SheetTab $active>Sheet1</SheetTab>
          <SheetTab>Sheet2</SheetTab>
          <SheetTab>Sheet3</SheetTab>
          <SheetTab>Sheet4</SheetTab>
          <AddSheet aria-label="新工作表"><Svg w={12} h={12} stroke="#666"><circle cx="6" cy="6" r="5.300" /><path d="M6 3v6M3 6h6" /></Svg></AddSheet>
          <Dots $w={20} />
          <HScroll>
            <ScrollArrow aria-label="向左滚动"><Triangle dir="left" /></ScrollArrow>
            <HThumb />
            <ScrollArrow aria-label="向右滚动"><Triangle dir="right" /></ScrollArrow>
          </HScroll>
        </SheetTabs>

        <StatusBar>
          <StatusIcon />
          <ViewButton $on aria-label="普通"><NormalViewIcon /></ViewButton>
          <ViewButton aria-label="页面布局"><PageViewIcon /></ViewButton>
          <ViewButton aria-label="分页预览"><BreakViewIcon /></ViewButton>
          <ZoomStep aria-label="缩小">−</ZoomStep>
          <ZoomSlider type="range" min={0} max={100} defaultValue={55} aria-label="显示比例" />
          <ZoomStep aria-label="放大">+</ZoomStep>
          <ZoomValue>130%</ZoomValue>
        </StatusBar>
      </Window>
    </>
  );
}
